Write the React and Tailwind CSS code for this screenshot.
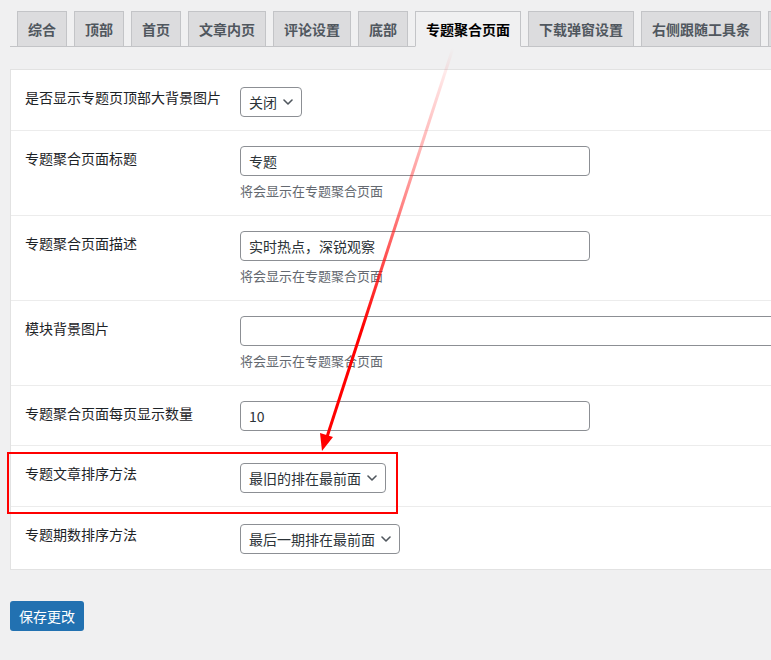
import React from 'react';

const tabs = ['综合', '顶部', '首页', '文章内页', '评论设置', '底部', '专题聚合页面', '下载弹窗设置', '右侧跟随工具条', '其他设置'];

const Chevron = () => (
  <svg width="10" height="6" viewBox="0 0 10 6" fill="none">
    <polyline points="1,1 5,5 9,1" stroke="#50575e" strokeWidth="1.6" strokeLinecap="round" strokeLinejoin="round" />
  </svg>
);

const Select = ({ value }) => (
  <div className="flex h-[30px] items-center gap-[6px] rounded-[4px] border border-[#8c8f94] bg-white pl-[8px] pr-[8px] text-[14px] text-[#2c3338]">
    <span className="leading-[20px]">{value}</span>
    <Chevron />
  </div>
);

const Input = ({ value, wide }) => (
  <div className={`flex h-[30px] items-center rounded-[4px] border border-[#8c8f94] bg-white px-[8px] text-[14px] text-[#2c3338] ${wide ? 'w-[560px]' : 'w-[350px]'}`}>
    {value}
  </div>
);

// pad: classes for the field cell, tuned per row type
const Row = ({ label, children, pad = 'pt-[15px] pb-[14px]', last }) => (
  <div className={`flex ${last ? '' : 'border-b border-[#ececec]'}`}>
    <div className="w-[229px] shrink-0 pl-[14px] pt-[18px] text-[14px] leading-[18px] text-[#1d2327]">{label}</div>
    <div className={pad}>{children}</div>
  </div>
);

const Desc = () => (
  <div className="mt-[4px] text-[13px] leading-[21px] text-[#646970]">将会显示在专题聚合页面</div>
);

export default function App() {
  return (
    <div className="relative h-[660px] w-[771px] overflow-hidden bg-[#f0f0f1] font-['Noto_Sans_CJK_SC','Microsoft_YaHei',sans-serif]">
      <div className="w-[900px] pl-[10px] pt-[11px]">
        {/* Tabs */}
        <div className="flex border-b border-[#c3c4c7]">
          {tabs.map((t) => {
            const active = t === '专题聚合页面';
            return (
              <div
                key={t}
                className={`-mb-px ml-[7px] shrink-0 border border-[#c3c4c7] px-[10px] py-[5px] text-[14px] font-semibold leading-[24px] ${
                  active ? 'border-b-[#f0f0f1] bg-[#f0f0f1] text-black' : 'bg-[#dcdcde] text-[#50575e]'
                }`}
              >
                {t}
              </div>
            );
          })}
        </div>

        {/* Panel */}
        <div className="mt-[22px] border border-[#e2e2e2] bg-white">
          <Row label="是否显示专题页顶部大背景图片" pad="pt-[17px] pb-[13px]">
            <Select value="关闭" />
          </Row>
          <Row label="专题聚合页面标题">
            <Input value="专题" />
            <Desc />
          </Row>
          <Row label="专题聚合页面描述">
            <Input value="实时热点，深锐观察" />
            <Desc />
          </Row>
          <Row label="模块背景图片">
            <Input value="" wide />
            <Desc />
          </Row>
          <Row label="专题聚合页面每页显示数量" pad="pt-[15px] pb-[14px]">
            <Input value="10" />
          </Row>
          <Row label="专题文章排序方法" pad="pt-[17px] pb-[13px]">
            <Select value="最旧的排在最前面" />
          </Row>
          <Row label="专题期数排序方法" pad="pt-[17px] pb-[15px]" last>
            <Select value="最后一期排在最前面" />
          </Row>
        </div>

        <button className="mt-[31px] flex h-[30px] w-[74px] items-center justify-center rounded-[3px] bg-[#2271b1] text-[14px] text-white">
          保存更改
        </button>
      </div>

      {/* Annotation: red box */}
      <div className="pointer-events-none absolute left-[7px] top-[452px] h-[62px] w-[391px] border-2 border-[#ff0000]" />

      {/* Annotation: arrow */}
      <svg className="pointer-events-none absolute left-0 top-0" width="771" height="660" viewBox="0 0 771 660">
        <defs>
          <linearGradient id="arrowGrad" gradientUnits="userSpaceOnUse" x1="453" y1="48" x2="360" y2="330">
            <stop offset="0" stopColor="#ff0000" stopOpacity="0" />
            <stop offset="0.35" stopColor="#ff3030" stopOpacity="0.35" />
            <stop offset="1" stopColor="#ff0000" stopOpacity="1" />
          </linearGradient>
        </defs>
        <line x1="453" y1="48" x2="327" y2="437" stroke="url(#arrowGrad)" strokeWidth="3" />
        <polygon points="322,451 333,437 320,433" fill="#ff0000" />
      </svg>
    </div>
  );
}
